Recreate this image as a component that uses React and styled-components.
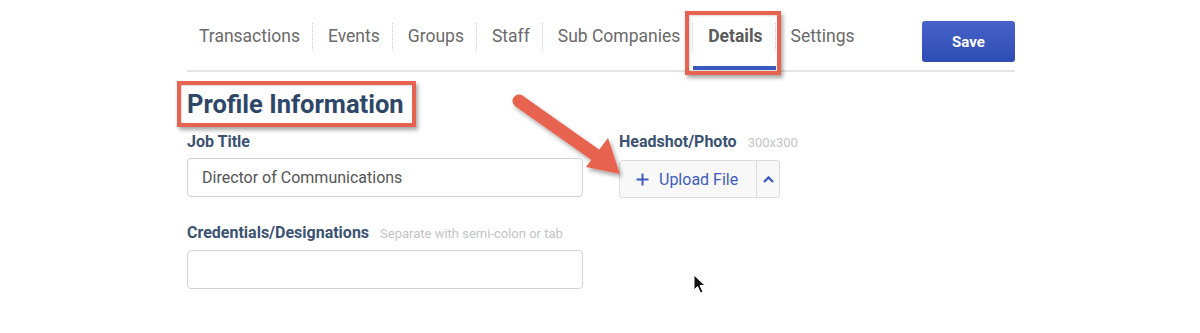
import React from 'react'
import styled, { createGlobalStyle } from 'styled-components'

const GlobalStyle = createGlobalStyle`
  body {
    margin: 0;
    background: #ffffff;
    font-family: Roboto, "Liberation Sans", Arial, sans-serif;
  }
`

const Page = styled.div`
  position: relative;
  width: 1200px;
  height: 333px;
  overflow: hidden;
  padding: 12px 0 0 187px;
  box-sizing: border-box;
`

const Content = styled.div`
  width: 828px;
`

const NavRow = styled.div`
  display: flex;
  align-items: flex-start;
  border-bottom: 2px solid #e4e4e4;
`

const Tabs = styled.div`
  display: flex;
`

const Tab = styled.div`
  position: relative;
  padding: 11px 0 16px;
  border-bottom: 4px solid ${p => (p.$active ? '#3b57c0' : 'transparent')};
`

const TabText = styled.div`
  padding: 0 12px 0 ${p => (p.$first ? 12 : 15)}px;
  line-height: 27px;
  font-size: 17.5px;
  color: ${p => (p.$active ? '#5a5a5a' : '#6a6a6a')};
  font-weight: ${p => (p.$active ? 700 : 400)};
  border-right: ${p => (p.$last ? 'none' : '1px dotted #c9c9c9')};
`

const Highlight = styled.div`
  position: absolute;
  top: ${p => p.$top}px;
  left: ${p => p.$left}px;
  right: ${p => p.$right}px;
  bottom: ${p => p.$bottom}px;
  border: 4px solid #e8634f;
  box-shadow: 2px 3px 4px rgba(0, 0, 0, 0.35), inset 1px 1px 2px rgba(0, 0, 0, 0.15);
  pointer-events: none;
`

const SaveButton = styled.button`
  margin: 9px 0 0 auto;
  width: 93px;
  height: 41px;
  border: none;
  border-radius: 3px;
  background: linear-gradient(180deg, #4763c9 0%, #2f4cb3 100%);
  color: #ffffff;
  font-family: Roboto, "Liberation Sans", Arial, sans-serif;
  font-size: 15px;
  font-weight: 700;
`

const HeadingWrap = styled.div`
  position: relative;
  display: inline-block;
  margin-top: 17px;
`

const Heading = styled.h2`
  margin: 0;
  font-size: 25.5px;
  line-height: 30px;
  font-weight: 700;
  color: #2e4769;
`

const FormGrid = styled.div`
  display: grid;
  grid-template-columns: 396px auto;
  column-gap: 36px;
  margin-top: 13px;
`

const Field = styled.div`
  display: flex;
  flex-direction: column;
  margin-bottom: 25px;
`

const Label = styled.div`
  display: flex;
  align-items: baseline;
  gap: 11px;
  font-size: 16px;
  line-height: 19px;
  font-weight: 700;
  color: #3b5272;
  margin-bottom: 7px;
`

const Hint = styled.span`
  font-size: 13px;
  font-weight: 400;
  color: #c4c4c4;
`

const TextInput = styled.div`
  height: 39px;
  box-sizing: border-box;
  border: 1px solid #d3d3d3;
  border-radius: 4px;
  padding-left: 14px;
  display: flex;
  align-items: center;
  font-size: 16px;
  color: #555555;
`

const UploadGroup = styled.div`
  display: flex;
  width: 161px;
  height: 38px;
  box-sizing: border-box;
  border: 1px solid #dcdcdc;
  border-radius: 3px;
  background: #f8f8f8;
  margin-top: 1px;
`

const UploadMain = styled.div`
  flex: 1;
  display: flex;
  align-items: center;
  gap: 10px;
  padding-left: 16px;
  font-size: 16px;
  color: #3e5cc0;
  border-right: 1px solid #dcdcdc;
`

const UploadToggle = styled.div`
  width: 22px;
  display: flex;
  align-items: center;
  justify-content: center;
`

const Overlay = styled.svg`
  position: absolute;
  left: 0;
  top: 0;
  pointer-events: none;
`

export default function App() {
  const tabs = ['Transactions', 'Events', 'Groups', 'Staff', 'Sub Companies', 'Details', 'Settings']

  return (
    <>
      <GlobalStyle />
      <Page>
        <Content>
          <NavRow>
            <Tabs>
              {tabs.map((t, i) => {
                const active = t === 'Details'
                return (
                  <Tab key={t} $active={active}>
                    <TabText $active={active} $first={i === 0} $last={i === tabs.length - 1}>
                      {t}
                    </TabText>
                    {active && <Highlight $top={-1} $left={-8} $right={-5} $bottom={-9} />}
                  </Tab>
                )
              })}
            </Tabs>
            <SaveButton>Save</SaveButton>
          </NavRow>

          <HeadingWrap>
            <Heading>Profile Information</Heading>
            <Highlight $top={-8} $left={-10} $right={-12} $bottom={-8} />
          </HeadingWrap>

          <FormGrid>
            <Field>
              <Label>Job Title</Label>
              <TextInput>Director of Communications</TextInput>
            </Field>
            <Field>
              <Label>
                Headshot/Photo <Hint>300x300</Hint>
              </Label>
              <UploadGroup>
                <UploadMain>
                  <svg width="13" height="13" viewBox="0 0 13 13">
                    <path d="M6.5 0.5v12M0.5 6.5h12" stroke="#3e5cc0" strokeWidth="2" />
                  </svg>
                  Upload File
                </UploadMain>
                <UploadToggle>
                  <svg width="11" height="7" viewBox="0 0 11 7">
                    <path d="M1 6l4.5-4.5L10 6" fill="none" stroke="#3e5cc0" strokeWidth="2.4" />
                  </svg>
                </UploadToggle>
              </UploadGroup>
            </Field>
            <Field>
              <Label>
                Credentials/Designations <Hint>Separate with semi-colon or tab</Hint>
              </Label>
              <TextInput />
            </Field>
          </FormGrid>
        </Content>

        <Overlay width="1200" height="333" viewBox="0 0 1200 333">
          <defs>
            <filter id="shadow" x="-20%" y="-20%" width="140%" height="140%">
              <feDropShadow dx="2" dy="3" stdDeviation="2" floodColor="#000" floodOpacity="0.35" />
            </filter>
          </defs>
          <g filter="url(#shadow)" fill="#e8634f">
            <line x1="519" y1="101" x2="597" y2="156" stroke="#e8634f" strokeWidth="13" strokeLinecap="round" />
            <polygon points="608,138 586,167 620,174" />
          </g>
          <path
            d="M694 275 L694 290 L697.5 286.5 L700.5 293 L703 292 L700 285.5 L705 285.5 Z"
            fill="#111"
            stroke="#fff"
            strokeWidth="1"
            strokeLinejoin="round"
          />
        </Overlay>
      </Page>
    </>
  )
}
